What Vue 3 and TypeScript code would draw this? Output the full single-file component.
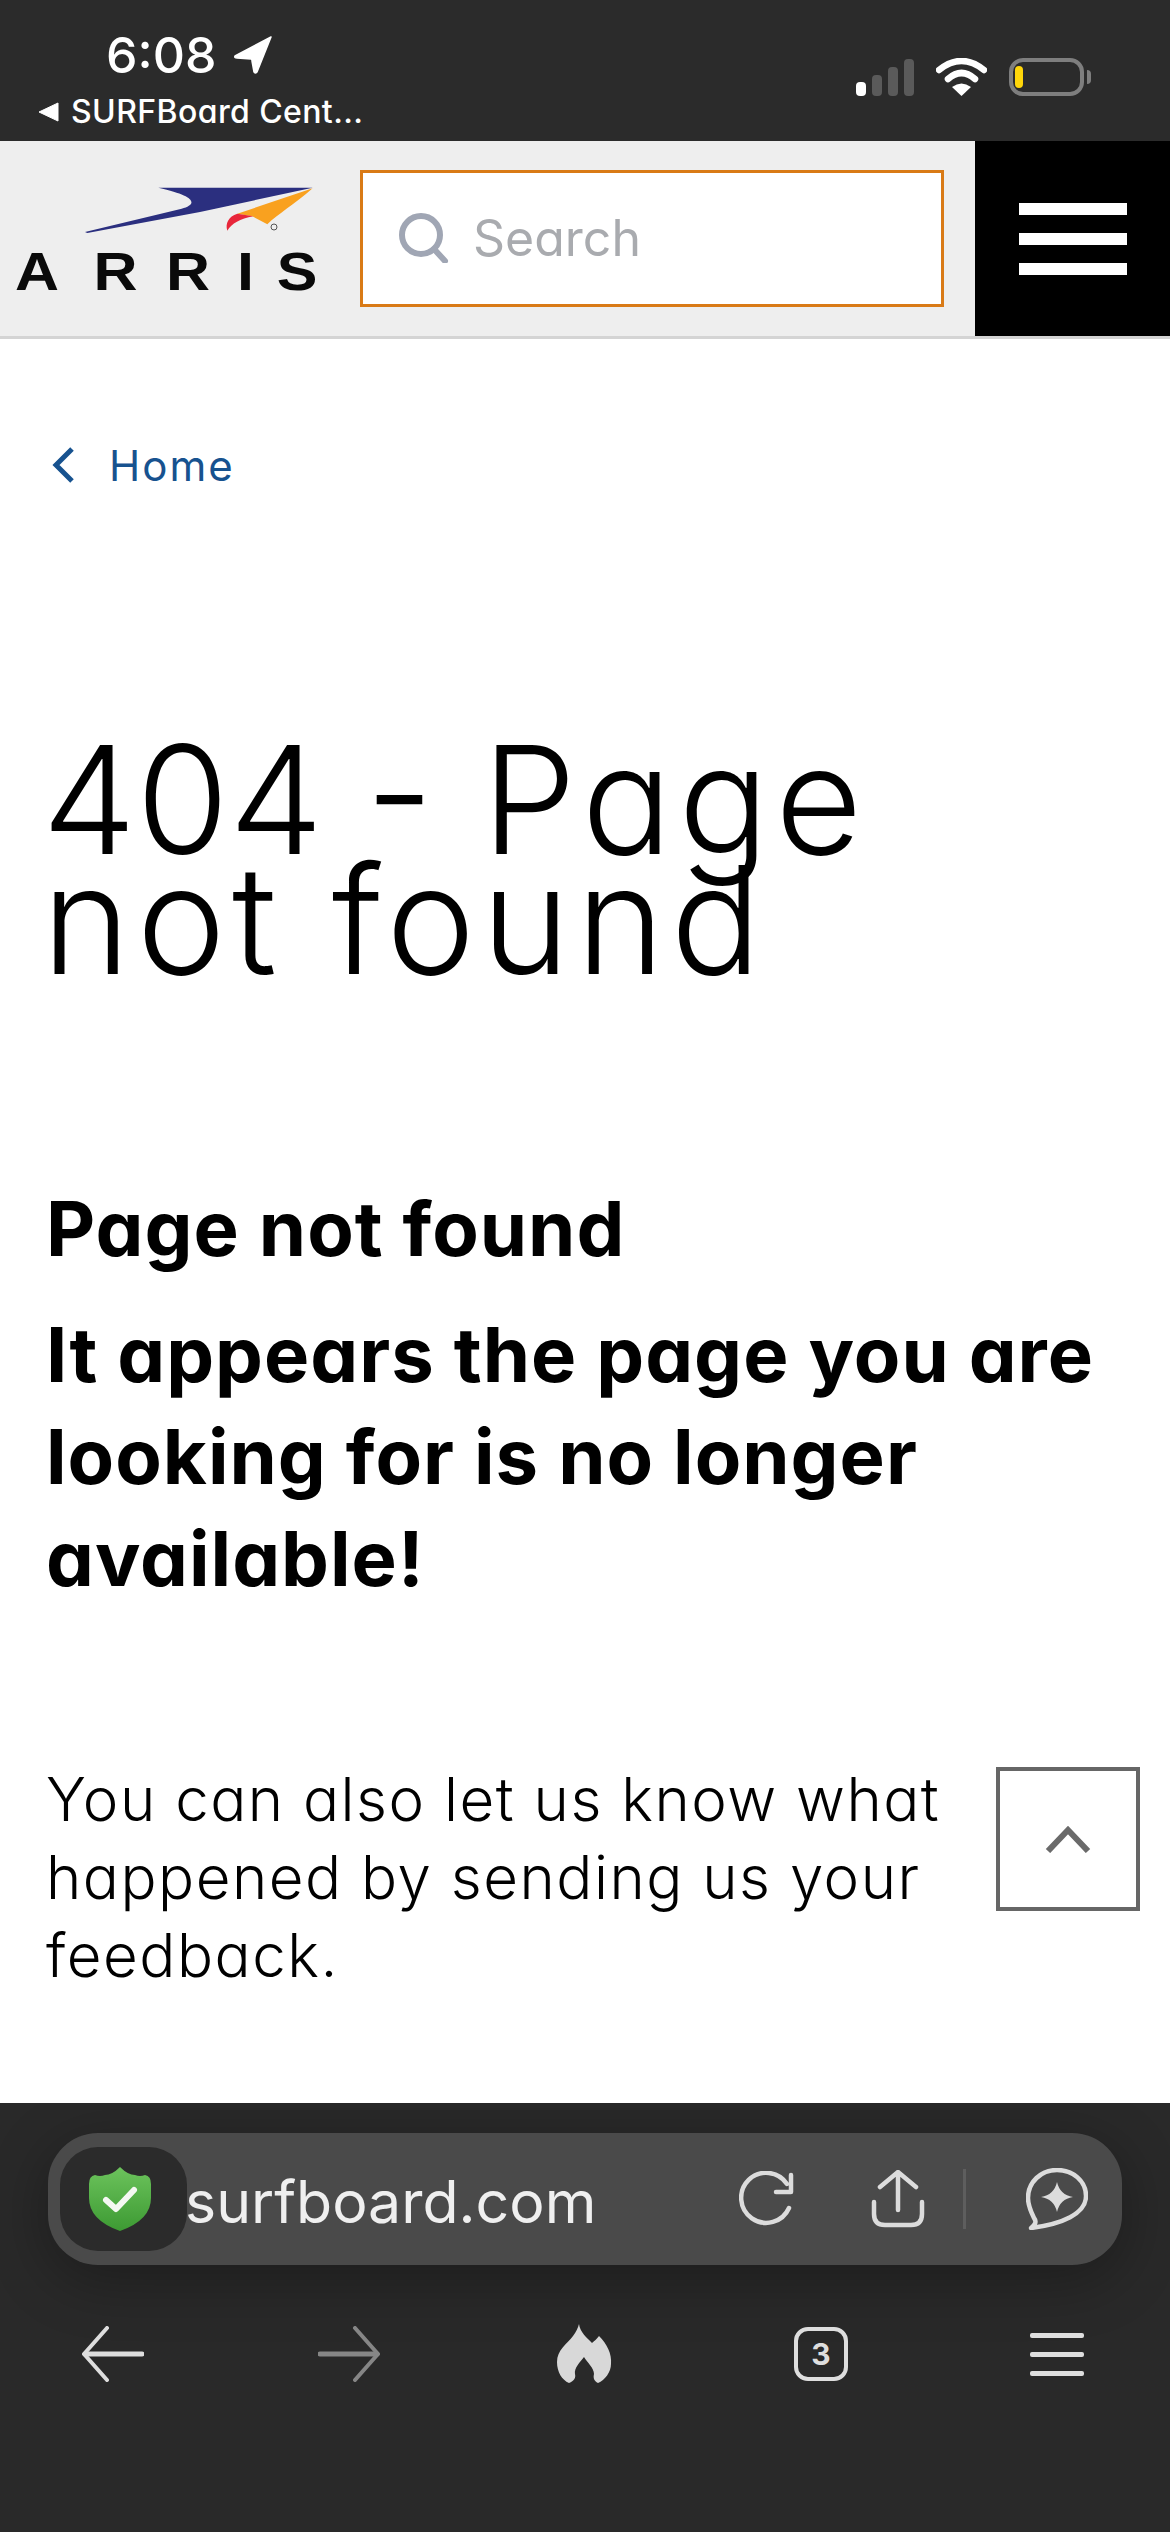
<template>
  <div class="screen">
    <div class="status-bar">
      <div class="status-left">
        <div class="time-row">
          <span class="time">6:08</span>
          <svg class="location" width="38" height="38" viewBox="0 0 38 38">
            <path d="M37 1 L1 20 Q0 22 3 22 L17 23 Q18 23 18 25 L20 36 Q21 38 23 36 Z" fill="#fff" stroke="#fff" stroke-width="1.5" stroke-linejoin="round" />
          </svg>
        </div>
        <div class="back-app">
          <svg width="22" height="20" viewBox="0 0 22 20"><path d="M21 1 V19 L2 10 Z" fill="#fff" stroke="#fff" stroke-linejoin="round" /></svg>
          <span>SURFBoard Cent...</span>
        </div>
      </div>
      <div class="status-right">
        <div class="signal">
          <i class="bar on" style="height: 14px"></i>
          <i class="bar" style="height: 21px"></i>
          <i class="bar" style="height: 29px"></i>
          <i class="bar" style="height: 37px"></i>
        </div>
        <svg class="wifi" width="51" height="38" viewBox="0 0 51 38">
          <path d="M3 12 Q25.5 -6 48 12" fill="none" stroke="#fff" stroke-width="6.5" stroke-linecap="round" />
          <path d="M12 21 Q25.5 9 39 21" fill="none" stroke="#fff" stroke-width="6.5" stroke-linecap="round" />
          <path d="M16 29 Q25.5 22 35 29 L25.5 38 Z" fill="#fff" />
        </svg>
        <div class="battery"><i class="charge"></i></div>
        <i class="battery-nub"></i>
      </div>
    </div>

    <header class="site-header">
      <a class="logo">
        <svg width="340" height="134" viewBox="0 125 1020 402">
          <path d="M475 172 L938 172 L600 245 L262 308 L255 305 L545 235 C592 222 592 198 475 172 Z" fill="#2b2f7f" />
          <path d="M938 174 C880 225 835 250 802 282 L757 258 L712 250 Z" fill="#f9a11f" />
          <path d="M712 250 L760 258 C720 265 695 280 682 301 C675 280 685 258 712 250 Z" fill="#e8263a" />
          <circle cx="822" cy="290" r="9" fill="none" stroke="#555" stroke-width="3" />
          <text class="logo-word" transform="scale(1.15 1)" x="39 244 433 618 722" y="480">ARRIS</text>
        </svg>
      </a>
      <div class="search-box">
        <svg width="50" height="50" viewBox="0 0 50 50">
          <circle cx="22" cy="22" r="19" fill="none" stroke="#a0a6b4" stroke-width="6" />
          <path d="M35 36 L46 48" stroke="#a0a6b4" stroke-width="6" stroke-linecap="round" />
        </svg>
        <span class="search-text">Search</span>
      </div>
      <div class="menu-button">
        <i></i><i></i><i></i>
      </div>
    </header>

    <main class="content">
      <a class="crumb">
        <svg width="24" height="38" viewBox="0 0 24 38"><path d="M21 3 L5 19 L21 35" fill="none" stroke="#17528f" stroke-width="5" /></svg>
        <span>Home</span>
      </a>
      <h1 class="title"><span class="code">404 -</span> Page not found</h1>
      <h2 class="lead">Page not found</h2>
      <h2 class="lead second">It appears the page you are looking for is no longer available!</h2>
      <p class="note">You can also let us know what happened by sending us your feedback.</p>
      <button class="to-top" type="button">
        <svg width="46" height="28" viewBox="0 0 46 28"><path d="M3 26 L23 5 L43 26" fill="none" stroke="#6a6a6a" stroke-width="6" /></svg>
      </button>
    </main>

    <footer class="browser-bar">
      <div class="url-bar">
        <div class="shield-box">
          <svg width="64" height="66" viewBox="0 0 64 66">
            <defs>
              <linearGradient id="shieldFill" x1="0" y1="0" x2="0" y2="1">
                <stop offset="0" stop-color="#6cc35c" />
                <stop offset="1" stop-color="#3d9a33" />
              </linearGradient>
            </defs>
            <path d="M32 1 Q40 9 47 9 Q52 11 57 9 Q63 10 63 18 V32 Q63 54 32 65 Q1 54 1 32 V18 Q1 10 7 9 Q12 11 17 9 Q24 9 32 1 Z" fill="url(#shieldFill)" />
            <path d="M18 34 L28 43 L46 24" fill="none" stroke="#f4f8f2" stroke-width="6" stroke-linecap="round" stroke-linejoin="round" />
          </svg>
        </div>
        <span class="url-text">surfboard.com</span>
        <div class="url-actions">
          <svg class="reload" width="56" height="56" viewBox="0 0 56 56" fill="none" stroke="#dcdcdc" stroke-width="4.5" stroke-linecap="round" stroke-linejoin="round">
            <path d="M50 37 A25 25 0 1 1 48 13" />
            <path d="M52 4 V21 H37" />
          </svg>
          <svg class="share" width="54" height="58" viewBox="0 0 54 58" fill="none" stroke="#dcdcdc" stroke-width="4.5" stroke-linecap="round" stroke-linejoin="round">
            <path d="M27 40 V3 M9 17 L27 2 L45 17" />
            <path d="M3 32 V44 Q3 55 14 55 H40 Q51 55 51 44 V32" />
          </svg>
          <i class="divider"></i>
          <svg class="chat" width="62" height="62" viewBox="0 0 62 62" fill="none">
            <path d="M8 50 Q2 38 2 30 C2 14 15 2 31 2 C47 2 60 13 60 28 C60 46 36 56 5 60 Q12 55 8 50 Z" stroke="#dcdcdc" stroke-width="4.5" stroke-linejoin="round" />
            <path d="M31 14 Q34 27 47 29 Q34 31 31 44 Q28 31 15 29 Q28 27 31 14 Z" fill="#dcdcdc" />
          </svg>
        </div>
      </div>
      <nav class="bottom-nav">
        <svg width="62" height="56" viewBox="0 0 62 56" fill="none" stroke="#dedede" stroke-width="4" stroke-linecap="round" stroke-linejoin="round">
          <path d="M3 28 H60" stroke-width="5" /><path d="M25 2 L2 28 L25 54" />
        </svg>
        <svg width="62" height="56" viewBox="0 0 62 56" fill="none" stroke="#868686" stroke-width="4" stroke-linecap="round" stroke-linejoin="round">
          <path d="M2 28 H59" stroke-width="5" /><path d="M37 2 L60 28 L37 54" />
        </svg>
        <svg width="56" height="60" viewBox="0 0 56 60">
          <path fill="#d8d8d8" d="M22 0 C23 8 30 14 35 19 C37 17 40 15 42 12 C50 20 55 30 54 40 C54 48 48 56 41 59 C37 57 36 54 37 50 C37 44 30 38 27 33 C23 38 17 44 18 50 C19 54 17 57 12 59 C5 56 0 48 0 38 C0 26 10 20 16 12 C19 8 21 4 22 0 Z" />
        </svg>
        <div class="tabs-count">3</div>
        <div class="nav-menu"><i></i><i></i><i></i></div>
      </nav>
    </footer>
  </div>
</template>

<script setup lang="ts">
</script>

<style scoped>
.screen {
  width: 1170px;
  height: 2532px;
  display: flex;
  flex-direction: column;
  overflow: hidden;
  background: #fff;
  font-family: Inter, "Liberation Sans", sans-serif;
  font-feature-settings: "cv11" 1;
  color: #000;
}

.status-bar {
  height: 141px;
  flex: none;
  background: #2b2b2b;
  display: flex;
  justify-content: space-between;
  color: #fff;
}

.status-left {
  padding: 31px 0 0 37px;
}

.time-row {
  display: flex;
  align-items: center;
  gap: 18px;
  padding-left: 69px;
  height: 48px;
}

.time {
  font-size: 50px;
  font-weight: 500;
  line-height: 48px;
}

.back-app {
  display: flex;
  align-items: center;
  gap: 12px;
  margin-top: 14px;
  font-size: 32px;
  font-weight: 500;
  letter-spacing: 0.4px;
  line-height: 38px;
}

.status-right {
  display: flex;
  align-items: center;
  height: 38px;
  margin-top: 58px;
  padding-right: 79px;
}

.signal {
  display: flex;
  align-items: flex-end;
  gap: 6px;
  height: 37px;
  margin-right: 22px;
}

.bar {
  width: 10px;
  border-radius: 4px;
  background: #5a5a5a;
}

.bar.on {
  background: #fff;
}

.wifi {
  margin-right: 22px;
}

.battery {
  width: 75px;
  height: 38px;
  box-sizing: border-box;
  border: 4px solid #7e7e7e;
  border-radius: 14px;
  padding: 4px 2px;
}

.charge {
  display: block;
  width: 8px;
  height: 22px;
  border-radius: 4px;
  background: #ffd60a;
}

.battery-nub {
  width: 4px;
  height: 14px;
  margin-left: 3px;
  border-radius: 0 7px 7px 0;
  background: #7e7e7e;
}

.site-header {
  height: 198px;
  flex: none;
  box-sizing: border-box;
  border-bottom: 3px solid #d4d4d4;
  background: #eeeeee;
  display: flex;
  align-items: center;
}

.logo {
  width: 360px;
  flex: none;
  display: flex;
}

.logo-word {
  font-family: "Liberation Sans", sans-serif;
  font-size: 159px;
  font-weight: 700;
  fill: #0a0a0a;
}

.search-box {
  width: 584px;
  height: 137px;
  flex: none;
  box-sizing: border-box;
  border: 3px solid #d97a16;
  background: #fff;
  display: flex;
  align-items: center;
  gap: 24px;
  padding: 0 0 2px 36px;
}

.search-text {
  font-size: 50px;
  color: #a9abaf;
}

.menu-button {
  width: 195px;
  height: 195px;
  margin-left: auto;
  flex: none;
  background: #000;
  display: flex;
  flex-direction: column;
  align-items: center;
  justify-content: center;
  gap: 18px;
}

.menu-button i {
  width: 108px;
  height: 12px;
  background: #fff;
}

.content {
  position: relative;
  flex: 1;
  padding: 0 46px;
}

.crumb {
  display: flex;
  align-items: center;
  gap: 34px;
  height: 50px;
  margin: 101px 0 0 5px;
  color: #17528f;
  font-size: 42px;
  letter-spacing: 2px;
}

.title {
  margin: 250px 0 0 -4px;
  font-size: 150px;
  font-weight: 350;
  letter-spacing: 6.4px;
  line-height: 120px;
  max-width: 900px;
}

.code {
  letter-spacing: 0;
}

.lead {
  margin: 197px 0 0;
  font-size: 76px;
  font-weight: 700;
  letter-spacing: 1px;
  line-height: 102px;
}

.lead.second {
  margin-top: 24px;
}

.note {
  margin: 151px 0 0;
  width: 920px;
  font-size: 60px;
  font-weight: 350;
  letter-spacing: 1.5px;
  line-height: 78px;
}

.to-top {
  position: absolute;
  left: 996px;
  top: 1428px;
  width: 144px;
  height: 144px;
  padding: 0;
  box-sizing: border-box;
  border: 4px solid #666;
  background: #fff;
  display: flex;
  align-items: center;
  justify-content: center;
}

.browser-bar {
  height: 429px;
  flex: none;
  background: #292929;
  overflow: hidden;
  padding: 30px 48px 0;
  box-sizing: border-box;
}

.url-bar {
  height: 132px;
  border-radius: 50px;
  background: #4a4a4a;
  box-shadow: 0 14px 60px rgba(0, 0, 0, 0.3);
  display: flex;
  align-items: center;
  padding-left: 12px;
}

.shield-box {
  width: 127px;
  height: 104px;
  flex: none;
  border-radius: 38px;
  background: #2b2b2b;
  display: flex;
  align-items: center;
  justify-content: center;
  padding-right: 8px;
  box-sizing: border-box;
}

.url-text {
  font-size: 59px;
  color: #efefef;
  font-feature-settings: normal;
  line-height: 60px;
  padding-top: 6px;
  margin-left: -2px;
}

.url-actions {
  margin-left: auto;
  display: flex;
  align-items: center;
  padding-right: 34px;
}

.share {
  margin-left: 76px;
}

.divider {
  width: 3px;
  height: 60px;
  margin: 0 60px 0 38px;
  background: #5e5e5e;
}

.bottom-nav {
  display: grid;
  grid-template-columns: repeat(5, 236px);
  justify-items: center;
  align-items: center;
  height: 60px;
  margin: 59px 0 0 -53px;
}

.tabs-count {
  width: 54px;
  height: 54px;
  box-sizing: border-box;
  border: 4px solid #dedede;
  border-radius: 14px;
  color: #dedede;
  font-size: 30px;
  font-weight: 700;
  line-height: 46px;
  text-align: center;
}

.nav-menu {
  width: 54px;
  display: flex;
  flex-direction: column;
  gap: 14px;
}

.nav-menu i {
  height: 5px;
  border-radius: 2px;
  background: #dedede;
}
</style>

<style>
html,
body {
  margin: 0;
  background: #292929;
}
</style>
